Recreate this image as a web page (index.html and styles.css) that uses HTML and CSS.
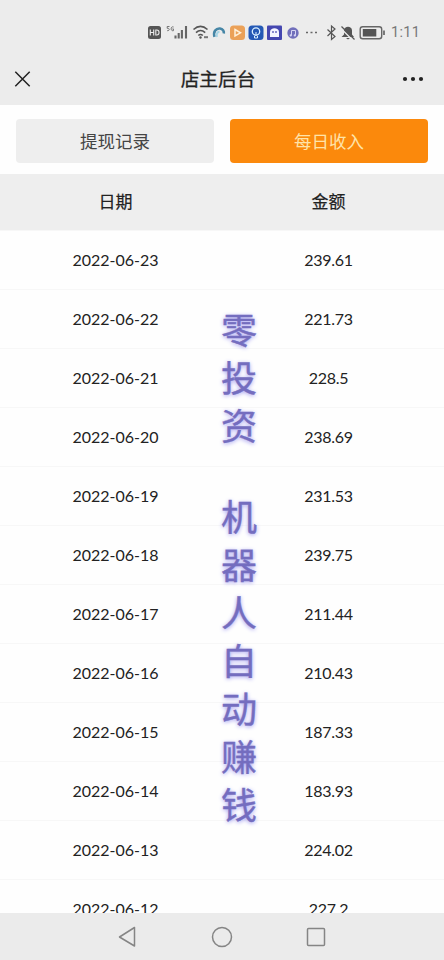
FILE: index.html
```
<!DOCTYPE html>
<html lang="zh-CN">
<head>
<meta charset="utf-8">
<title>店主后台</title>
<link rel="stylesheet" href="styles.css">
</head>
<body>
<div class="screen">
  <header class="top">
    <div class="status">
      <svg class="status-icons" width="242" height="20" viewBox="146 23 242 20" fill="none">
        <rect x="148" y="26" width="13" height="13" rx="2.5" fill="#555"/>
        <path d="M150.3 29.5v6M153.7 29.5v6M150.3 32.5h3.4M155.8 30v5h1c3 0 3-5 0-5z" stroke="#ececec" stroke-width="1.1"/>
        <path d="M169.5 26.5h-2.3v1.8c2.7-.5 2.7 2.8 0 2.4M173.6 27c-3-1.4-3.4 4.4-.2 3.7v-1.8h-1" stroke="#666" stroke-width=".9"/>
        <path d="M175.5 38.5v-3M178.7 38.5v-5.5M181.9 38.5v-8.5M186 38.5V26" stroke="#666" stroke-width="2.1"/>
        <path d="M193.5 29.5c4.5-4 9.5-4 14 0M196 32.6c3-2.7 6.2-2.7 9.2 0M198.3 35.5c1.5-1.3 3-1.3 4.5 0" stroke="#555" stroke-width="1.6"/>
        <circle cx="200.5" cy="37.5" r="1.2" fill="#555"/>
        <path d="M204 37.2h4" stroke="#777" stroke-width="2"/>
        <path d="M214.500 36.800c-1.500-5 1.500-8.800 5.500-8.300 2.800.4 4.200 2.600 3.800 5" stroke="#4686a6" stroke-width="2.6"/>
        <path d="M217 37c-1-3 .5-5 2.500-5.500" stroke="#a7d5e5" stroke-width="2"/>
        <rect x="230" y="25.5" width="15" height="14.5" rx="3.5" fill="#eba158"/>
        <path d="M235 29.500l5.500 3.300-5.500 3.200z" stroke="#fff0d9" stroke-width="1.5"/>
        <rect x="248.5" y="25.5" width="15" height="14.5" rx="3.5" fill="#2459b5"/>
        <circle cx="256" cy="31.5" r="3.7" stroke="#d9efff" stroke-width="1.3"/>
        <path d="M254.500 36v2h3v-2M256 36v-4" stroke="#d9efff"/>
        <rect x="267" y="25.5" width="15" height="14.5" rx="1" fill="#4547b0"/>
        <path d="M270 37v-5c0-5 9-5 9 0v5z" fill="#f4f4ff"/>
        <path d="M273 31v2M276 31v2" stroke="#4547b0" stroke-width="1.2"/>
        <circle cx="293" cy="33" r="5.7" fill="#716fbb"/>
        <path d="M291.500 35.500v-5h4v5" stroke="#d6d5f3"/>
        <circle cx="290.700" cy="35.400" r="1.1" fill="#d6d5f3"/><circle cx="294.800" cy="35.400" r="1.1" fill="#d6d5f3"/>
        <path d="M306 32.500h2M310.500 32.500h2M315 32.500h2" stroke="#666" stroke-width="1.7"/>
        <path d="M327.500 29.500l7.500 7-3.500 3V26l3.500 3-7.500 7" stroke="#555" stroke-width="1.2"/>
        <path d="M341.500 37h12.500l-2-2.500v-4c0-5-8-5-8 0v4zM346 38h4l-2 1.500z" fill="#555"/>
        <path d="M341 28.500l12 12" stroke="#ececec" stroke-width="1.3"/>
        <path d="M341.500 26.500l13 13" stroke="#555" stroke-width="1.3"/>
        <rect x="360.200" y="26.700" width="21.500" height="12" rx="2.5" stroke="#666" stroke-width="1.4"/>
        <rect x="362.800" y="29" width="13.500" height="7.500" fill="#555"/>
        <path d="M384 30.500v4.500" stroke="#666" stroke-width="1.7"/>
      </svg>
      <span class="clock">1:11</span>
    </div>
    <div class="title-bar">
      <svg width="22" height="16" viewBox="0 0 22 16"><path d="M1.300.8l14.400 14.400M15.700.8L1.300 15.200" stroke="#222" stroke-width="1.5"/></svg>
      <h1>店主后台</h1>
      <svg width="22" height="6" viewBox="0 0 22 6" fill="#222"><circle cx="3" cy="3" r="2.1"/><circle cx="11" cy="3" r="2.1"/><circle cx="19" cy="3" r="2.1"/></svg>
    </div>
  </header>
  <nav class="tabs">
    <button class="tab">提现记录</button>
    <button class="tab tab-active">每日收入</button>
  </nav>
  <main class="list">
    <div class="row head"><span>日期</span><span>金额</span></div>
    <div class="row"><span>2022-06-23</span><span class="amount">239.61</span></div>
    <div class="row"><span>2022-06-22</span><span class="amount">221.73</span></div>
    <div class="row"><span>2022-06-21</span><span class="amount">228.5</span></div>
    <div class="row"><span>2022-06-20</span><span class="amount">238.69</span></div>
    <div class="row"><span>2022-06-19</span><span class="amount">231.53</span></div>
    <div class="row"><span>2022-06-18</span><span class="amount">239.75</span></div>
    <div class="row"><span>2022-06-17</span><span class="amount">211.44</span></div>
    <div class="row"><span>2022-06-16</span><span class="amount">210.43</span></div>
    <div class="row"><span>2022-06-15</span><span class="amount">187.33</span></div>
    <div class="row"><span>2022-06-14</span><span class="amount">183.93</span></div>
    <div class="row"><span>2022-06-13</span><span class="amount">224.02</span></div>
    <div class="row"><span>2022-06-12</span><span class="amount">227.2</span></div>
  </main>
  <footer class="nav">
    <svg width="18" height="22" viewBox="0 0 18 22"><path d="M16.500 1.500v18.500L1.500 11z"/></svg>
    <svg width="22" height="22" viewBox="0 0 22 22"><circle cx="11" cy="11" r="9.5"/></svg>
    <svg width="20" height="20" viewBox="0 0 20 20"><rect x="1.500" y="1.500" width="17" height="17" rx="1"/></svg>
  </footer>
  <div class="overlay">
    <div>零<br>投<br>资</div>
    <div>机<br>器<br>人<br>自<br>动<br>赚<br>钱</div>
  </div>
</div>
</body>
</html>
```
FILE: styles.css
```
* { box-sizing: border-box; }
body { margin: 0; font-family: Lato, "Noto Sans CJK SC", sans-serif; color: #222; background: #fefefe; }
.screen { position: relative; width: 444px; height: 960px; display: flex; flex-direction: column; overflow: hidden; }
svg { display: block; flex: none; }
.top { height: 105px; flex: none; background: #ececec; }
.status { height: 55px; padding: 11px 24px 0 0; display: flex; align-items: center; justify-content: flex-end; gap: 3px; }
.clock { width: 29px; font: 14.5px/20px Roboto, sans-serif; letter-spacing: .3px; color: #777; white-space: nowrap; }
.title-bar { height: 50px; padding: 0 20px 2px 14px; display: flex; align-items: center; justify-content: space-between; }
h1 { margin: 0; padding-bottom: 1px; font-size: 18.7px; line-height: 28px; font-weight: 400; -webkit-text-stroke: .3px #222; transform: translateX(-1px); }
.tabs { height: 69px; flex: none; display: grid; grid-template-columns: 1fr 1fr; gap: 16px; padding: 14px 16px 11px; }
.tab { border: 0; border-radius: 4px; padding: 0; background: #eee; color: #444; font: 17.5px/44px "Noto Sans CJK SC", sans-serif; }
.tab-active { background: #fb890c; color: #ffe3a8; }
.list { flex: 1; min-height: 0; overflow: hidden; }
.row { height: 59px; display: grid; grid-template-columns: 231px 195px; align-items: center; text-align: center; font-size: 16px; line-height: 20px; border-bottom: 1px solid #f7f7f7; }
.amount { letter-spacing: -.3px; }
.head { height: 57px; background: #eee; font-size: 17px; -webkit-text-stroke: .2px #222; }
.nav { height: 47px; flex: none; background: #ebebeb; display: grid; grid-template-columns: 18px 97px 20px; column-gap: 75px; column-gap: 0; padding-left: 118px; align-items: center; grid-template-columns: 93px 95px 20px; }
.nav svg { fill: none; stroke: #858585; stroke-width: 1.5; stroke-linejoin: round; }
.overlay { position: absolute; top: 304px; left: 221px; width: 37px; display: flex; flex-direction: column; gap: 43px; color: #746dbf; font: 400 36px/48px "Noto Sans CJK SC", sans-serif; -webkit-text-stroke: .4px #746dbf; text-shadow: 0 1px 4px #9993ef; }
```
